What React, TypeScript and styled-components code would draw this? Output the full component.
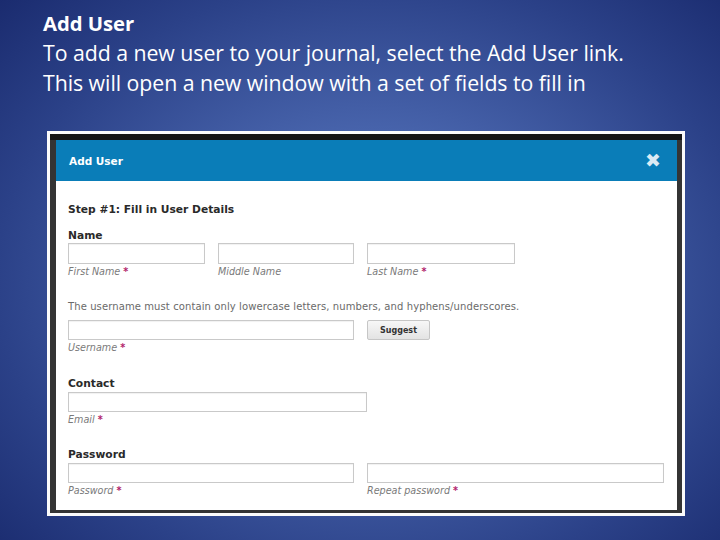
import React from "react";
import styled, { createGlobalStyle } from "styled-components";

const Global = createGlobalStyle`
  html, body { margin: 0; padding: 0; }
  body { width: 720px; height: 540px; overflow: hidden; }
`;

const Slide = styled.div`
  width: 720px;
  height: 540px;
  box-sizing: border-box;
  padding: 8px 0 0 43px;
  background: radial-gradient(ellipse 75% 80% at 52% 52%, #5f7cc2 0%, #4763ab 35%, #2b4188 70%, #17276a 100%);
  display: flex;
  flex-direction: column;
  font-family: "Open Sans", "Liberation Sans", sans-serif;
`;

const Title = styled.div<{ $bold?: boolean }>`
  color: #fff;
  font-size: ${(p) => (p.$bold ? 20.3 : 21.3)}px;
  line-height: 30px;
  font-weight: ${(p) => (p.$bold ? 700 : 400)};
  letter-spacing: -0.05px;
  white-space: nowrap;
`;

const Frame = styled.div`
  margin: 33px 0 0 4px;
  width: 638px;
  height: 385px;
  box-sizing: border-box;
  border: 3px solid #fbfbfb;
  background: #343434;
  display: flex;
  flex-direction: column;
  padding: 6px 5px 3px 6px;
  overflow: hidden;
  position: relative;
`;

const TopStrip = styled.div`
  position: absolute;
  left: 0;
  right: 0;
  top: 0;
  height: 6px;
  background: #151515;
`;

const Modal = styled.div`
  flex: 1;
  background: #fff;
  display: flex;
  flex-direction: column;
  position: relative;
  font-family: "DejaVu Sans", "Noto Sans", sans-serif;
`;

const Header = styled.div`
  height: 41px;
  background: #0a7db8;
  display: flex;
  align-items: center;
  justify-content: space-between;
  padding: 0 16px 0 13px;
  color: #fff;
  font-weight: 700;
  font-size: 10.5px;
`;

const Close = styled.span`
  color: #dbeaf4;
  font-size: 19px;
  font-weight: 700;
  line-height: 1;
  margin-top: -1px;
`;

const Body = styled.div`
  padding: 22px 0 0 12px;
  display: flex;
  flex-direction: column;
`;

const Heading = styled.div<{ $mt?: number }>`
  font-size: 10.7px;
  line-height: 14px;
  font-weight: 700;
  color: #2a2a2a;
  margin-top: ${(p) => p.$mt ?? 0}px;
`;

const Row = styled.div<{ $mt?: number }>`
  display: flex;
  gap: 13px;
  margin-top: ${(p) => p.$mt ?? 0}px;
`;

const Field = styled.div<{ $w: number }>`
  width: ${(p) => p.$w}px;
  display: flex;
  flex-direction: column;
`;

const Input = styled.div<{ $h?: number }>`
  height: ${(p) => p.$h ?? 21}px;
  box-sizing: border-box;
  border: 1px solid #c9c9c9;
  box-shadow: inset 0 1px 1px rgba(0, 0, 0, 0.06);
  background: #fff;
`;

const Label = styled.div`
  font-size: 9.6px;
  line-height: 15px;
  font-style: italic;
  color: #7a7a7a;
`;

const Req = styled.span`
  color: #b1236b;
  font-style: normal;
  font-weight: 700;
`;

const Help = styled.div`
  margin-top: 21px;
  font-size: 10px;
  line-height: 14px;
  color: #6a6a6a;
  letter-spacing: 0.1px;
  white-space: nowrap;
`;

const Suggest = styled.div`
  width: 63px;
  height: 20px;
  box-sizing: border-box;
  border: 1px solid #c6c6c6;
  border-radius: 2px;
  background: linear-gradient(#f7f7f7, #e3e3e3);
  display: flex;
  align-items: center;
  justify-content: center;
  font-size: 8px;
  font-weight: 700;
  color: #333;
`;

function F({ w, label, req, h }: { w: number; label: string; req?: boolean; h?: number }) {
  return (
    <Field $w={w}>
      <Input $h={h} />
      <Label>
        {label} {req && <Req>*</Req>}
      </Label>
    </Field>
  );
}

export default function App() {
  return (
    <>
      <Global />
      <Slide>
        <Title $bold>Add User</Title>
        <Title>To add a new user to your journal, select the Add User link.</Title>
        <Title>This will open a new window with a set of fields to fill in</Title>
        <Frame>
          <TopStrip />
          <Modal>
            <Header>
              <span>Add User</span>
              <Close>✖</Close>
            </Header>
            <Body>
              <Heading>Step #1: Fill in User Details</Heading>
              <Heading $mt={12}>Name</Heading>
              <Row>
                <F w={137} label="First Name" req />
                <F w={136} label="Middle Name" />
                <F w={148} label="Last Name" req />
              </Row>
              <Help>The username must contain only lowercase letters, numbers, and hyphens/underscores.</Help>
              <Row $mt={6}>
                <F w={286} label="Username" req h={20} />
                <Suggest>Suggest</Suggest>
              </Row>
              <Heading $mt={22}>Contact</Heading>
              <Row $mt={1}>
                <F w={299} label="Email" req h={20} />
              </Row>
              <Heading $mt={21}>Password</Heading>
              <Row $mt={1}>
                <F w={286} label="Password" req h={20} />
                <F w={297} label="Repeat password" req h={20} />
              </Row>
            </Body>
          </Modal>
        </Frame>
      </Slide>
    </>
  );
}
